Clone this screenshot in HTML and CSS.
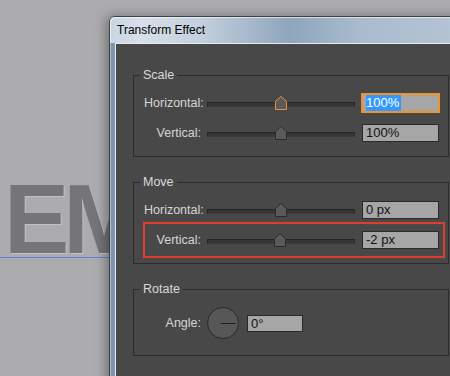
FILE: index.html
```html
<!DOCTYPE html>
<html lang="en">
<head>
    <meta charset="UTF-8">
    <meta name="viewport" content="width=device-width, initial-scale=1.0">
    <title>Transform Effect</title>
    <link rel="stylesheet" href="styles.css">
</head>
<body>
    <!-- Artboard behind the dialog -->
    <div class="artboard">
        <div class="art">EM</div>
        <div class="guide"></div>
    </div>

    <div class="dialog">
        <div class="titlebar">Transform Effect</div>
        <div class="panel">
            <fieldset class="group">
                <legend>Scale</legend>
                <div class="row">
                    <label>Horizontal:</label>
                    <div class="slider">
                        <svg class="thumb" style="left: 50%" width="12" height="14" viewBox="0 0 12 14"><polygon class="thumb-active" points="0.5,5.5 6,0.5 11.5,5.5 11.5,13.5 0.5,13.5"/></svg>
                    </div>
                    <div class="field focused"><span class="sel">100%</span></div>
                </div>
                <div class="row">
                    <label>Vertical:</label>
                    <div class="slider">
                        <svg class="thumb" style="left: 50%" width="12" height="14" viewBox="0 0 12 14"><polygon points="0.5,5.5 6,0.5 11.5,5.5 11.5,13.5 0.5,13.5"/></svg>
                    </div>
                    <div class="field">100%</div>
                </div>
            </fieldset>

            <fieldset class="group">
                <legend>Move</legend>
                <div class="row">
                    <label>Horizontal:</label>
                    <div class="slider">
                        <svg class="thumb" style="left: 50%" width="12" height="14" viewBox="0 0 12 14"><polygon points="0.5,5.5 6,0.5 11.5,5.5 11.5,13.5 0.5,13.5"/></svg>
                    </div>
                    <div class="field">0 px</div>
                </div>
                <div class="row marked">
                    <label>Vertical:</label>
                    <div class="slider">
                        <svg class="thumb" style="left: 49.3%" width="12" height="14" viewBox="0 0 12 14"><polygon points="0.5,5.5 6,0.5 11.5,5.5 11.5,13.5 0.5,13.5"/></svg>
                    </div>
                    <div class="field">-2 px</div>
                </div>
            </fieldset>

            <fieldset class="group rotate">
                <legend>Rotate</legend>
                <div class="angle-row">
                    <label>Angle:</label>
                    <div class="dial"></div>
                    <div class="field small">0°</div>
                </div>
            </fieldset>

            <fieldset class="group">
                <legend>Options</legend>
            </fieldset>
        </div>
    </div>
</body>
</html>
```

FILE: styles.css
```css
/* Illustrator-like transform dialog over the artboard */
body {
    margin: 0;
    height: 376px;
    overflow: hidden;
    position: relative;
    background-color: #acacae;
    font-family: "Liberation Sans", Arial, sans-serif;
}

.artboard {
    height: 100%;
}
.art {
    position: absolute;
    left: 4px;
    top: 170px;
    font-size: 98px;
    line-height: 98px;
    font-weight: bold;
    letter-spacing: -6px;
    color: #757577;
    text-shadow: 1px 1px 0 rgba(255, 255, 255, 0.25);
}
.guide {
    position: absolute;
    left: 0;
    top: 257px;
    width: 110px;
    height: 1px;
    background-color: #5a82d8;
}

/* Window frame */
.dialog {
    position: absolute;
    left: 109px;
    top: 16px;
    width: 358px;
    height: 400px;
    padding: 0 5px;
    background: linear-gradient(90deg, #d8e1ea 0, #7f96ae 1px, #7b93ab 5px);
    border: 1px solid #3d4146;
    border-radius: 6px 6px 0 0;
    box-shadow: -3px 0 12px rgba(0, 0, 0, 0.35);
}
.titlebar {
    height: 26px;
    line-height: 26px;
    margin: 0 -5px;
    padding-left: 7px;
    font-size: 12px;
    color: #000;
    border-radius: 5px 5px 0 0;
    background: linear-gradient(90deg, #c9d5e2 0, #d7e0ea 30px, #c3d0dd 90px, #8fa5bc 180px, #a9bbcd 250px, #b7c6d6 100%);
    box-shadow: inset 1px 1px 0 rgba(255, 255, 255, 0.6);
}
.panel {
    height: 360px;
    padding: 23px 17px 0;
    background-color: #484848;
    border-top: 1px solid #e4ebf2;
    border-left: 1px solid #e4ebf2;
    display: flex;
    flex-direction: column;
    gap: 17px;
}

/* Groups */
.group {
    width: 316px;
    box-sizing: border-box;
    margin: 0;
    padding: 10px 0 13px 10px;
    border: 1px solid #2c2c2c;
    display: flex;
    flex-direction: column;
    gap: 10px;
}
.group legend {
    margin-left: -4px;
    padding: 0 3px;
    font-size: 12.5px;
    line-height: 16px;
    color: #dadada;
}
.rotate {
    padding-bottom: 16px;
}

.row {
    display: grid;
    grid-template-columns: 57px 148px 77px;
    column-gap: 6px;
    align-items: center;
    width: 295px;
    height: 20px;
    position: relative;
}
.row label,
.angle-row label {
    text-align: right;
    font-size: 12.5px;
    color: #d6d6d6;
}
.row .field {
    margin-left: 1px;
}

/* Red annotation box around the edited row */
.marked::after {
    content: "";
    position: absolute;
    top: -8px;
    bottom: -8px;
    left: -1px;
    right: -6px;
    border: 2px solid #e23b30;
}

/* Slider */
.slider {
    position: relative;
    height: 5px;
    margin-top: 3px;
    box-sizing: border-box;
    background-color: #363636;
    border: 1px solid #262626;
    border-bottom-color: #3c3c3c;
}
.thumb {
    position: absolute;
    top: -7px;
    transform: translateX(-50%);
}
.thumb polygon {
    fill: #5a5a5a;
    stroke: #2a2a2a;
    stroke-width: 1;
}
.thumb .thumb-active {
    stroke: #ee922e;
}

/* Number fields */
.field {
    width: 77px;
    height: 18px;
    box-sizing: border-box;
    padding-left: 3px;
    background-color: #a6a6a6;
    border: 1px solid #2a2a2a;
    font-size: 13px;
    line-height: 16px;
    color: #111;
}
.focused {
    border-color: #ee922e;
    box-shadow: 0 0 0 1px #ee922e;
}
.sel {
    display: inline-block;
    height: 16px;
    padding-right: 2px;
    background-color: #3399ff;
    color: #fff;
}
.small {
    width: 56px;
    height: 17px;
}

/* Angle dial */
.angle-row {
    display: grid;
    grid-template-columns: 57px 32px 56px;
    column-gap: 6px;
    align-items: center;
}
.angle-row .field {
    margin-left: 2px;
}
.dial {
    width: 32px;
    height: 32px;
    box-sizing: border-box;
    border-radius: 50%;
    background-color: #575757;
    border: 1px solid #2a2a2a;
    position: relative;
}
.dial::after {
    content: "";
    position: absolute;
    left: 50%;
    top: 50%;
    width: 50%;
    height: 1px;
    margin-left: -2px;
    background-color: #1f1f1f;
}
```
